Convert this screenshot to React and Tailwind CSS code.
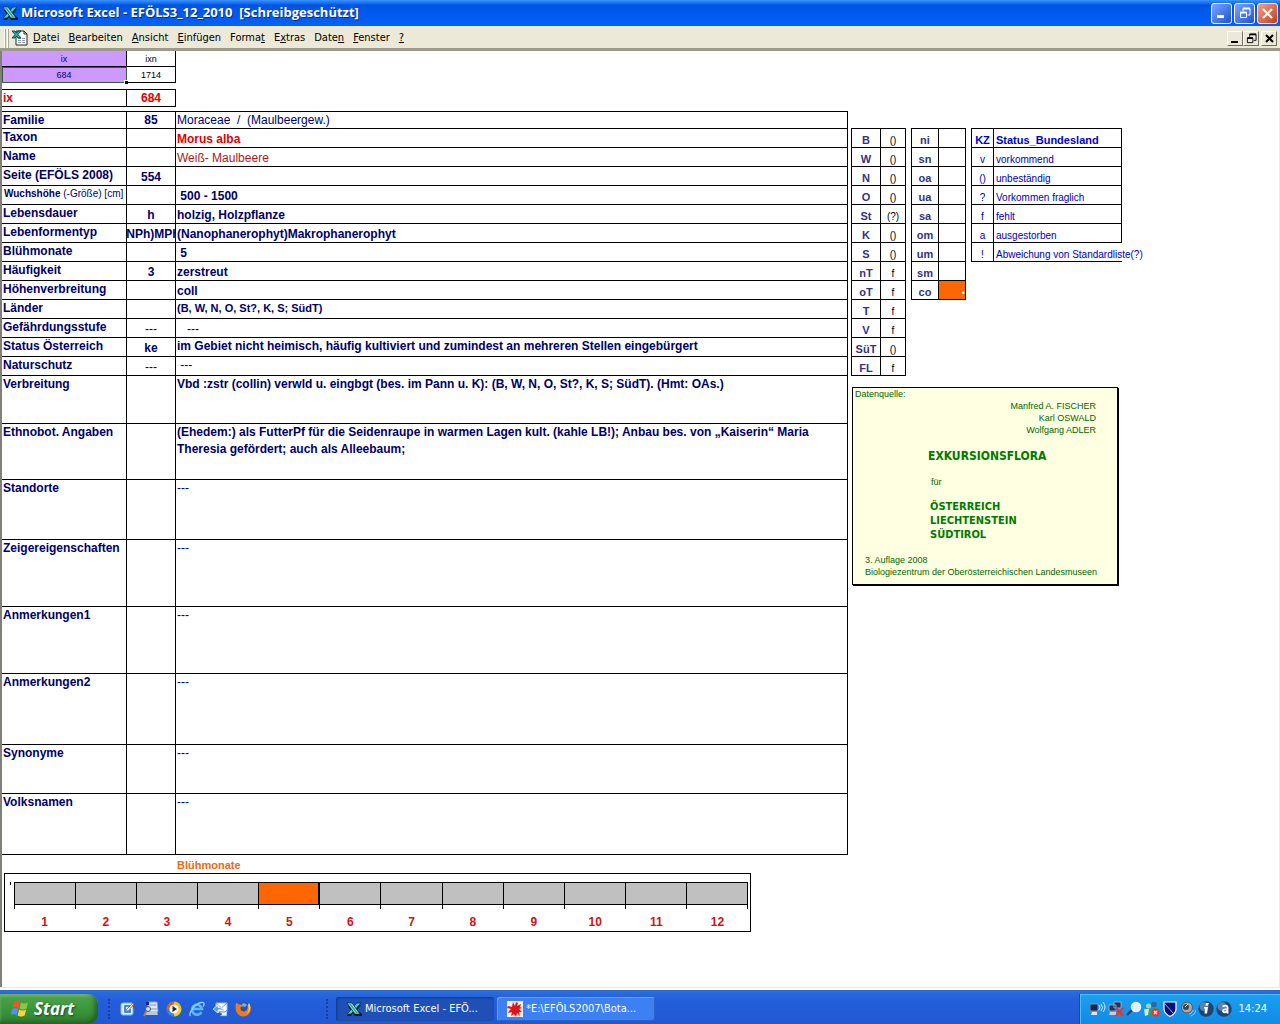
import React from "react";

const rows = [
  { label: "Familie", mid: "85", text: "Moraceae  /  (Maulbeergew.)", h: "h-[17px]", look: "font-normal align-bottom text-[#000060]" },
  { label: "Taxon", text: "Morus alba", h: "h-[19px]", look: "align-bottom text-[#e00000]" },
  { label: "Name", text: "Weiß- Maulbeere", h: "h-[19px]", look: "font-normal align-bottom text-[#b01818]" },
  { label: "Seite (EFÖLS 2008)", mid: "554", text: "", h: "h-[19px]", look: "" },
  { label: "Wuchshöhe", note: "(-Größe) [cm]", text: " 500 - 1500", h: "h-[19px]", look: "align-bottom" },
  { label: "Lebensdauer", mid: "h", text: "holzig, Holzpflanze", h: "h-[19px]", look: "align-bottom" },
  { label: "Lebenformentyp", mid: "(NPh)MPh", text: "(Nanophanerophyt)Makrophanerophyt", h: "h-[19px]", look: "align-bottom" },
  { label: "Blühmonate", text: " 5", h: "h-[19px]", look: "align-bottom" },
  { label: "Häufigkeit", mid: "3", text: "zerstreut", h: "h-[19px]", look: "align-bottom" },
  { label: "Höhenverbreitung", text: "coll", h: "h-[19px]", look: "align-bottom" },
  { label: "Länder", text: "(B, W, N, O, St?, K, S; SüdT)", h: "h-[19px]", look: "align-top text-[11px]" },
  { label: "Gefährdungsstufe", mid: "---", text: "   ---", h: "h-[19px]", look: "align-bottom font-normal" },
  { label: "Status Österreich", mid: "ke", text: "im Gebiet nicht heimisch, häufig kultiviert und zumindest an mehreren Stellen eingebürgert", h: "h-[19px]", look: "align-top" },
  { label: "Naturschutz", mid: "---", text: " ---", h: "h-[19px]", look: "align-top font-normal" },
  { label: "Verbreitung", text: "Vbd :zstr (collin) verwld u. eingbgt (bes. im Pann u. K): (B, W, N, O, St?, K, S; SüdT). (Hmt: OAs.)", h: "h-[48px]", look: "align-top" },
  { label: "Ethnobot. Angaben", text: "(Ehedem:) als FutterPf für die Seidenraupe in warmen Lagen kult. (kahle LB!); Anbau bes. von „Kaiserin“ Maria\nTheresia gefördert; auch als Alleebaum;", h: "h-[56px]", look: "align-top" },
  { label: "Standorte", text: "---", h: "h-[60px]", look: "align-top font-normal" },
  { label: "Zeigereigenschaften", text: "---", h: "h-[67px]", look: "align-top font-normal" },
  { label: "Anmerkungen1", text: "---", h: "h-[67px]", look: "align-top font-normal" },
  { label: "Anmerkungen2", text: "---", h: "h-[71px]", look: "align-top font-normal" },
  { label: "Synonyme", text: "---", h: "h-[49px]", look: "align-top font-normal" },
  { label: "Volksnamen", text: "---", h: "h-[61px]", look: "align-top font-normal" },
];

const regions = [
  ["B", "()"], ["W", "()"], ["N", "()"], ["O", "()"], ["St", "(?)"], ["K", "()"], ["S", "()"],
  ["nT", "f"], ["oT", "f"], ["T", "f"], ["V", "f"], ["SüT", "()"], ["FL", "f"],
];
const levels = ["ni", "sn", "oa", "ua", "sa", "om", "um", "sm", "co"];
const statusKeys = [
  ["v", "vorkommend"], ["()", "unbeständig"], ["?", "Vorkommen fraglich"], ["f", "fehlt"], ["a", "ausgestorben"],
  ["!", "Abweichung von Standardliste(?)"],
];
const months = [1, 2, 3, 4, 5, 6, 7, 8, 9, 10, 11, 12];
const menus = [
  ["", "D", "atei"], ["", "B", "earbeiten"], ["", "A", "nsicht"], ["", "E", "infügen"], ["Forma", "t", ""],
  ["E", "x", "tras"], ["Date", "n", ""], ["", "F", "enster"], ["", "?", ""],
];

function ExcelIcon() {
  return (
    <svg className="h-4 w-4 shrink-0" viewBox="0 0 16 16" aria-hidden="true">
      <path d="M2 5h4l3 3 4-4h2l-4 5 5 4v2H9L7 12l-2 3H1l4-5z" fill="#001018" />
      <path d="M11 2h4L5 13H1z" fill="#3fd3cf" stroke="#06343c" strokeWidth=".8" />
      <path d="M1 2h5l8 11H9z" fill="#a5f1e9" stroke="#06343c" strokeWidth=".8" />
      <path d="M3 3h2l7 9h-2z" fill="#25a49c" />
    </svg>
  );
}

function SheetIcon() {
  return (
    <svg className="h-4 w-4 shrink-0" viewBox="0 0 16 16" aria-hidden="true">
      <path d="M4 1h8l3 3v11H4z" fill="#fff" stroke="#222" />
      <path d="M12 1v3h3" fill="none" stroke="#222" />
      <path d="M6 8.500h3m1 0h3M6 10.500h3m1 0h3M6 12.500h3m1 0h3" stroke="#8b98a8" />
      <path d="M0 1h3l1.500 2L6 1h3L6 4.500 9 8H6L4.500 6 3 8H0l3-3.500z" fill="#1cb3ad" stroke="#033" strokeWidth=".8" />
    </svg>
  );
}

function RestoreGlyph({ className }) {
  return (
    <svg className={className} viewBox="0 0 12 12" fill="none" stroke="currentColor" aria-hidden="true">
      <path d="M4 4V1.500h7V8H8.500" strokeWidth="1" />
      <path d="M4 1.500h7" strokeWidth="2" />
      <path d="M1.500 5.500h6v5h-6z" strokeWidth="1" />
      <path d="M1.500 5.500h6" strokeWidth="2" />
    </svg>
  );
}

function TitleBar() {
  const btn = "flex h-[21px] w-[21px] items-center justify-center rounded-[3px] border border-white text-white";
  return (
    <header className="flex h-[26px] items-center bg-linear-to-b from-[#3a93ff] via-[#0054e3] via-20% to-[#0362fb] pr-[2px] pl-[2px]">
      <ExcelIcon />
      <h1 className="ml-[3px] flex-1 whitespace-pre font-['Open_Sans',sans-serif] text-[13px] font-bold text-white [text-shadow:1px_1px_#0a2a80]">
        {"Microsoft Excel - EFÖLS3_12_2010  [Schreibgeschützt]"}
      </h1>
      <div className="flex gap-[2px]">
        <button aria-label="Minimieren" className={btn + " bg-linear-to-br from-[#7ea5fa] to-[#1c50d8]"}>
          <svg className="h-3 w-3" viewBox="0 0 12 12" aria-hidden="true"><path d="M1 8h7v3H1z" fill="currentColor" /></svg>
        </button>
        <button aria-label="Wiederherstellen" className={btn + " bg-linear-to-br from-[#7ea5fa] to-[#1c50d8]"}>
          <RestoreGlyph className="h-3 w-3" />
        </button>
        <button aria-label="Schließen" className={btn + " bg-linear-to-br from-[#f0a088] to-[#c83810]"}>
          <svg className="h-[13px] w-[13px]" viewBox="0 0 13 13" aria-hidden="true"><path d="M2 2l9 9M11 2l-9 9" stroke="currentColor" strokeWidth="2.200" /></svg>
        </button>
      </div>
    </header>
  );
}

function MenuBar() {
  const btn = "flex h-[15px] w-4 items-center justify-center border border-t-white border-l-white border-r-[#716f64] border-b-[#716f64] bg-[#ece9d8] text-black";
  return (
    <nav className="flex h-[25px] items-center border-b-[3px] border-[#9d9a8c] bg-[#ece9d8] pt-[2px] pr-[3px] pl-1 font-['DejaVu_Sans_Condensed','DejaVu_Sans',sans-serif] text-[11px] text-black">
      <span className="mr-[3px] flex h-[19px] gap-px"><i className="w-[2px] border-r border-[#aca899] bg-white" /><i className="w-[2px] border-r border-[#aca899] bg-white" /></span>
      <SheetIcon />
      <div className="ml-[5px] flex flex-1 gap-[9px]">
        {menus.map(([a, key, b]) => (
          <button key={a + key + b}>{a}<span className="underline">{key}</span>{b}</button>
        ))}
      </div>
      <button aria-label="Mappe minimieren" className={btn}>
        <svg className="h-[9px] w-[10px]" viewBox="0 0 10 9" aria-hidden="true"><path d="M1 7h7v2H1z" fill="currentColor" /></svg>
      </button>
      <button aria-label="Mappe wiederherstellen" className={btn}><RestoreGlyph className="h-[11px] w-[11px]" /></button>
      <button aria-label="Mappe schließen" className={btn + " ml-[2px]"}>
        <svg className="h-[9px] w-[9px]" viewBox="0 0 9 9" aria-hidden="true"><path d="M1 1l7 7M8 1L1 8" stroke="currentColor" strokeWidth="2" /></svg>
      </button>
    </nav>
  );
}

function Record() {
  return (
    <table className="w-full table-fixed border-separate border-spacing-0 border-t border-black text-[12px] leading-4 font-bold text-[#000066]">
      <colgroup><col className="w-[125px]" /><col className="w-[49px]" /><col /></colgroup>
      <tbody>
        {rows.map((r) => (
          <tr key={r.label} className={r.h}>
            <th scope="row" className="border-r border-b border-black p-0 pl-px text-left align-top whitespace-nowrap">
              {r.note ? (
                <span className="block pl-px text-[10px]">{r.label} <span className="font-normal">{r.note}</span></span>
              ) : r.label}
            </th>
            <td className="border-r border-b border-black p-0 align-bottom">
              <div className={"flex justify-center overflow-hidden whitespace-nowrap " + (r.mid === "---" ? "font-normal" : "")}>{r.mid}</div>
            </td>
            <td className={"border-r border-b border-black p-0 pl-px whitespace-pre-wrap " + r.look}>
              {r.text && <div className={r.text.includes("\n") ? "leading-[17px]" : ""}>{r.text}</div>}
            </td>
          </tr>
        ))}
      </tbody>
    </table>
  );
}

function MonthChart() {
  return (
    <section className="font-bold">
      <h2 className="pt-[3px] pl-[175px] text-[11px] leading-[15px] text-[#ee6a10]">Blühmonate</h2>
      <div className="mr-[97px] ml-[2px] h-[59px] border border-black pt-[8px] pr-[2px] pl-[5px]">
        <div className="flex items-start">
          <i className="mr-[3px] h-[3px] w-px bg-black" />
          {months.map((m) => (
            <div key={m} className="h-[27px] flex-1 border-l border-black last:border-r">
              <div className={m === 5 ? "h-[23px] border-y border-r border-black bg-[#ff6600]" : "h-[23px] border-y border-black bg-[#c0c0c0]"} />
            </div>
          ))}
        </div>
        <div className="mt-[5px] flex pl-1 text-center text-[12px] leading-4 text-[#cc1414]">
          {months.map((m) => <span key={m} className="flex-1">{m}</span>)}
        </div>
      </div>
    </section>
  );
}

function CodeTables() {
  const table = "border-separate border-spacing-0 table-fixed border-t border-l border-black text-center text-[11px] leading-[14px]";
  const cell = "h-[19px] border-r border-b border-black p-0 align-bottom";
  return (
    <div className="flex items-start gap-[5px]">
      <table className={table + " w-[55px]"}>
        <colgroup><col className="w-[29px]" /><col className="w-[25px]" /></colgroup>
        <tbody>
          {regions.map(([k, v]) => (
            <tr key={k}><th scope="row" className={cell + " text-[#333380]"}>{k}</th><td className={cell + " text-[10px] leading-3 text-black"}>{v}</td></tr>
          ))}
        </tbody>
      </table>
      <table className={table + " w-[55px]"}>
        <colgroup><col className="w-[27px]" /><col className="w-[27px]" /></colgroup>
        <tbody>
          {levels.map((k) => (
            <tr key={k}>
              <th scope="row" className={cell + " text-[#333380]"}>{k}</th>
              <td className={k === "co" ? cell + " bg-[#ff6600] text-right text-[9px] leading-3 text-white" : cell}>{k === "co" ? "•" : ""}</td>
            </tr>
          ))}
        </tbody>
      </table>
      <table className={table + " w-[151px] text-[#0000b4]"}>
        <colgroup><col className="w-[22px]" /><col className="w-[128px]" /></colgroup>
        <thead>
          <tr><th className={cell + " text-[#0000cc]"}>KZ</th><th className={cell + " pl-[2px] text-left text-[#0000cc]"}>Status_Bundesland</th></tr>
        </thead>
        <tbody className="text-[10px] leading-3">
          {statusKeys.map(([k, v]) => (
            <tr key={k}>
              <td className={cell}>{k}</td>
              <td className={"h-[19px] border-b border-black p-0 pl-[2px] text-left align-bottom whitespace-nowrap " + (k === "!" ? "" : "border-r")}>{v}</td>
            </tr>
          ))}
        </tbody>
      </table>
    </div>
  );
}

function SourceCard() {
  return (
    <section className="mt-[11px] ml-px w-[266px] border border-black bg-[#ffffe1] pr-[13px] pb-[6px] pl-[2px] text-[9px] leading-3 text-[#006600] shadow-[1px_1px_#000]">
      <p>Datenquelle:</p>
      <p className="pr-2 text-right">Manfred A. FISCHER<br />Karl OSWALD<br />Wolfgang ADLER</p>
      <h2 className="mt-3 pl-[73px] font-['DejaVu_Sans_Condensed','DejaVu_Sans',sans-serif] text-[12px] leading-4 font-bold text-[#007a00]">EXKURSIONSFLORA</h2>
      <p className="mt-3 pl-[76px]">für</p>
      <p className="mt-3 pl-[75px] font-['DejaVu_Sans_Condensed','DejaVu_Sans',sans-serif] text-[11px] leading-[14px] font-bold text-[#007a00]">ÖSTERREICH<br />LIECHTENSTEIN<br />SÜDTIROL</p>
      <p className="mt-3 pl-[10px] whitespace-nowrap">3. Auflage 2008<br />Biologiezentrum der Oberösterreichischen Landesmuseen</p>
    </section>
  );
}

function Sheet() {
  return (
    <main className="flex flex-1 items-start border-r border-l-2 border-r-[#ece9d8] border-l-[#808078] bg-white">
      <div className="min-w-0 flex-1">
        <table className="w-[174px] table-fixed border-separate border-spacing-0 text-center text-[9px] leading-[14px]">
          <colgroup><col className="w-[125px]" /><col className="w-[49px]" /></colgroup>
          <tbody>
            <tr className="h-4">
              <td className="border-r border-b border-black bg-[#cc99ff] p-0 text-[#000080]">ix</td>
              <td className="border-r border-b border-black p-0 text-black">ixn</td>
            </tr>
            <tr className="h-4">
              <td className="relative border-r border-b border-black bg-[#cc99ff] p-0 text-[#000080] outline-1 -outline-offset-1 outline-[#3d5a3d]">
                684
                <i className="absolute -right-[2px] -bottom-[2px] h-1 w-1 border-t border-l border-white bg-black" />
              </td>
              <td className="border-r border-b border-black p-0 text-black">1714</td>
            </tr>
          </tbody>
        </table>
        <table className="mt-[6px] mb-1 w-[174px] table-fixed border-separate border-spacing-0 border-t border-black text-[12px] leading-4 font-bold text-[#e00000]">
          <colgroup><col className="w-[125px]" /><col className="w-[49px]" /></colgroup>
          <tbody>
            <tr>
              <th scope="row" className="h-[17px] border-r border-b border-black p-0 pl-px text-left">ix</th>
              <td className="border-r border-b border-black p-0 text-center">684</td>
            </tr>
          </tbody>
        </table>
        <Record />
        <MonthChart />
      </div>
      <aside className="mt-[77px] ml-[3px] w-[428px]">
        <CodeTables />
        <SourceCard />
      </aside>
    </main>
  );
}

const icon = "h-4 w-4";

function QuickLaunch() {
  return (
    <div className="flex gap-[7px]">
      <button aria-label="Desktop anzeigen"><svg className={icon} viewBox="0 0 16 16"><rect x="1" y="2" width="12" height="12" rx="2" fill="#d9efff" stroke="#7ab8ee" /><path d="M10 5H5v6h5V8" fill="none" stroke="#1f6fc0" strokeWidth="1.500" /><path d="M6 9l7-7 1 1-6 7z" fill="#fff" stroke="#2b6ca8" strokeWidth=".7" /><path d="M12 4l4 2-2 2z" fill="#a83820" /></svg></button>
      <button aria-label="Suche"><svg className={icon} viewBox="0 0 16 16"><path d="M5 1h9l1 10H5z" fill="#dfe9f6" stroke="#8fa6c8" /><path d="M7 4h6M7 8h7" stroke="#6a9ad8" /><path d="M3 11h11l1 3H2z" fill="#b8c8dd" /><circle cx="5" cy="8" r="2.500" fill="#bfe4ff" stroke="#555" /><path d="M3.500 10L1 15" stroke="#c87840" strokeWidth="1.800" /><path d="M3 1h3v3H3z" fill="#1020a0" /></svg></button>
      <button aria-label="Media Player"><svg className={icon} viewBox="0 0 16 16"><circle cx="8" cy="8" r="7.500" fill="#3f9d42" /><path d="M8 8V.5A7.500 7.500 0 0 0 .5 8z" fill="#e5582b" /><path d="M8 8V.5A7.500 7.500 0 0 1 15.500 8z" fill="#f6bd2a" /><path d="M8 8H.5A7.500 7.500 0 0 0 8 15.500z" fill="#3c7de0" /><path d="M8 8h7.500A7.500 7.500 0 0 1 8 15.500z" fill="#e9d030" /><circle cx="8" cy="8" r="4.600" fill="#fff" /><path d="M6.500 5l4.500 3-4.500 3z" fill="#222" /></svg></button>
      <button aria-label="Internet Explorer"><svg className={icon} viewBox="0 0 16 16" fill="none"><path d="M12.500 11A5 5 0 1 1 13 8H4" stroke="#56b8f5" strokeWidth="2.600" /><path d="M1.500 15C-1 12 6 3 12 1.500c4-.8 3.500 2 2 4" stroke="#8cd3fb" strokeWidth="1.300" /></svg></button>
      <button aria-label="Outlook Express"><svg className={icon} viewBox="0 0 16 16"><path d="M4 2h11v9H4z" fill="#fff" stroke="#9abce0" /><path d="M4 2l5.500 5L15 2" fill="none" stroke="#7a9cc8" /><path d="M1 8l5-4v2.500c4 0 6 2 6 4-2-2-4-2-6-1.500V12z" fill="#4da0ec" stroke="#e9f5ff" strokeWidth=".8" /><path d="M15 9v6H8l2-2-3-2h6z" fill="#e8f3ff" stroke="#3a80cc" strokeWidth=".7" /></svg></button>
      <button aria-label="Firefox"><svg className={icon} viewBox="0 0 16 16"><circle cx="8.500" cy="7" r="6" fill="#2456a8" /><path d="M8 2c2 0 3 1 4 2l-2 2-4-1z" fill="#66b4ea" /><path d="M1 2c1 0 2 1 3 1.500C6 3 7 4 7.500 5L5.500 6.500C5 9 7 11 9 10.500c3-.5 4-3 3.500-6L14 2c3 5 2 10-2 12.500-5 2.500-10-.5-11-5C.5 7 .5 4 1 2z" fill="#ee7a1c" /><path d="M14 2c3 5 1 10-3 11.500 3-3 3-6 2-9z" fill="#fbc443" /></svg></button>
    </div>
  );
}

function TrayIcons() {
  return (
    <div className="flex gap-[2px]" aria-hidden="true">
      <svg className={icon} viewBox="0 0 16 16"><path d="M0 3h8v7H0z" fill="#1a2450" stroke="#9ab" strokeWidth=".8" /><path d="M2 11h5v3H1z" fill="#dde4ea" /><path d="M9 4q2 2.500 0 5M11 3q3 3.500 0 7M13 1q4 5 0 10" fill="none" stroke="#d4ecff" /></svg>
      <svg className={icon} viewBox="0 0 16 16"><path d="M6 1h7v6H6zM1 4h7v6H1z" fill="#24335e" stroke="#a9b7cc" strokeWidth=".8" /><path d="M2 11h6v3H1z" fill="#ccd" /><path d="M8 7l7 8M15 7l-7 8" stroke="#e03838" strokeWidth="2.400" /></svg>
      <svg className={icon} viewBox="0 0 16 16"><path d="M6 9l-5 5" stroke="#243a70" strokeWidth="2.400" /><circle cx="10" cy="6" r="4.500" fill="#d8f0ff" stroke="#f4fbff" strokeWidth="1.500" /></svg>
      <svg className={icon} viewBox="0 0 16 16"><circle cx="10" cy="3.500" r="2.800" fill="#2c68a8" /><circle cx="4.500" cy="5" r="2.500" fill="#9ad8b0" /><path d="M1 8l5 1 6-3 2 3-4 6-4-2-4 2z" fill="#37a04c" /><path d="M0 8l5 0-1 6-3 1z" fill="#c9f0dc" /><circle cx="11.500" cy="11.500" r="4" fill="#dc3c24" /><path d="M10 10l3 3M13 10l-3 3" stroke="#fff" strokeWidth="1.300" /></svg>
      <svg className={icon} viewBox="0 0 16 16"><path d="M2 1h12v7c0 4-3 6-6 7.500C5 14 2 12 2 8z" fill="#081078" stroke="#fff" strokeWidth="1.200" /><path d="M3 3l8 9" stroke="#c8d4f4" strokeWidth=".8" /></svg>
      <svg className={icon} viewBox="0 0 16 16"><circle cx="7" cy="6.500" r="5.500" fill="#a9a9ad" stroke="#55565c" /><circle cx="6" cy="6" r="3" fill="#44464e" /><path d="M5 6l3-3" stroke="#e4e4e8" /><path d="M9 13q3 0 4-4M11 15q4-1 5-6" fill="none" stroke="#90c6f6" /></svg>
      <svg className={icon} viewBox="0 0 16 16"><circle cx="8" cy="8" r="7.700" fill="#1f456f" /><circle cx="6" cy="5.500" r="4.500" fill="#5a82ad" /><path d="M8 2h3l-1 2.500H7.500zM6 6h4l-1 6.500H6.500L7 7.500H6z" fill="#fff" /></svg>
      <svg className={icon} viewBox="0 0 16 16"><circle cx="8" cy="8" r="7.700" fill="#1f456f" /><circle cx="6" cy="5.500" r="4.500" fill="#5a82ad" /><path d="M6.500 5.500q4.500-2 5 .5v6.500M11 8.500q-4-.5-4 1.800 1 2 4 0" fill="none" stroke="#fff" strokeWidth="1.900" /></svg>
    </div>
  );
}

function Taskbar() {
  const task = "flex h-[24px] w-[158px] items-center gap-[3px] rounded-[3px] px-[10px] text-[11px] text-white";
  return (
    <footer className="flex h-[34px] items-end bg-linear-to-b from-[#2a6fd8] via-[#245edb] via-30% to-[#2258d2] font-['DejaVu_Sans_Condensed','DejaVu_Sans',sans-serif]">
      <button className="flex h-[30px] w-[98px] items-center gap-[5px] rounded-r-[10px] bg-linear-to-b from-[#4ea34e] via-[#3b963b] to-[#2f7f30] pl-[11px] shadow-[inset_-3px_-2px_5px_#1f5f24,inset_0_2px_3px_#7cc47c]">
        <svg className="h-[18px] w-[18px]" viewBox="0 0 18 18" aria-hidden="true">
          <path d="M3 2q3-2 6 0L7.500 8q-3-2-6 0z" fill="#f0562a" />
          <path d="M10 2.500q3 2 7 0L15.500 8.500q-4 2-7 0z" fill="#86c840" />
          <path d="M1.200 9q3-2 6 0L5.700 15q-3-2-6 0z" fill="#4f8ff0" />
          <path d="M8.200 9.500q3 2 7 0L13.700 15.500q-4 2-7 0z" fill="#fbd23c" />
        </svg>
        <span className="font-['Open_Sans',sans-serif] text-[17px] leading-5 font-bold text-white italic [text-shadow:1px_1px_2px_#1c4a1c]">Start</span>
      </button>
      <div className="flex h-[30px] flex-1 items-center">
        <i className="mr-[10px] ml-[10px] h-[20px] border-l-2 border-dotted border-[#173fa8]" />
        <QuickLaunch />
        <i className="mr-[8px] ml-[75px] h-[20px] border-l-2 border-dotted border-[#173fa8]" />
        <button className={task + " bg-[#1e50b5] shadow-[inset_1px_1px_2px_#123a8c]"}><ExcelIcon /><span className="whitespace-nowrap">Microsoft Excel - EFÖ...</span></button>
        <button className={task + " ml-[3px] bg-[#3c80f2] shadow-[inset_1px_1px_#6aa2fa,inset_-1px_-1px_#2a62cc]"}>
          <svg className="h-4 w-4 shrink-0" viewBox="0 0 16 16" aria-hidden="true"><path d="M0 0h16v16H0z" fill="#f8eeee" /><path d="M6 1l2 4 1-4 2 1-1 3 4-2-1 3 2 1-3 1 3 3-3 0 1 4-3-3-1 4-2-3-3 2 1-4-4 1 1-2 2-2-4-1 1-2 4 1z" fill="#e01414" /></svg>
          <span className="whitespace-nowrap">*E:\EFÖLS2007\Bota...</span>
        </button>
      </div>
      <div className="flex h-[30px] w-[201px] items-center justify-between border-l border-[#0b4fa8] bg-linear-to-b from-[#1aa0f2] to-[#118ae4] pr-[13px] pl-[10px] shadow-[inset_1px_1px_#4cc0fa]">
        <TrayIcons />
        <time className="text-[11px] text-white">14:24</time>
      </div>
    </footer>
  );
}

export default function App() {
  return (
    <div lang="de" className="flex min-h-screen flex-col bg-white font-['Liberation_Sans',Arial,sans-serif]">
      <TitleBar />
      <MenuBar />
      <Sheet />
      <div className="h-[3px] border-t border-[#ece9d8] bg-white" />
      <Taskbar />
    </div>
  );
}
